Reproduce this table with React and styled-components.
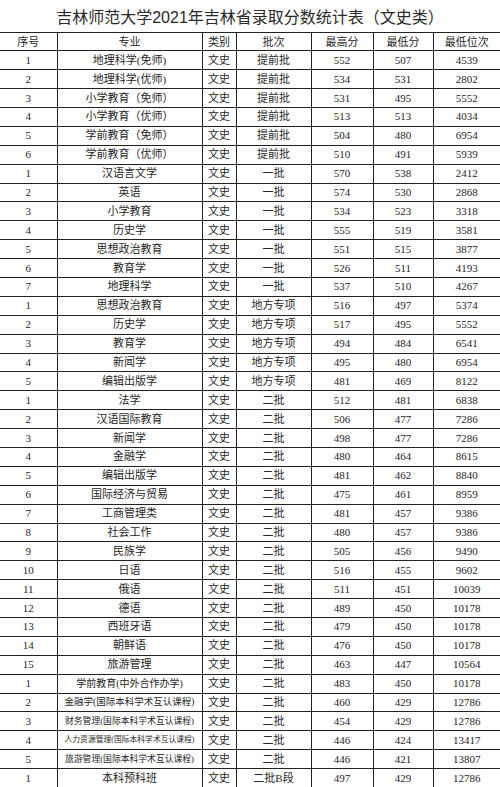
import React from "react";
import styled, { createGlobalStyle } from "styled-components";

const Global = createGlobalStyle`
  html, body { margin: 0; padding: 0; background: #fff; }
  body { width: 500px; overflow: hidden; }
`;

const Page = styled.div`
  width: 500px;
  background: #fff;
  color: #262626;
  font-family: "Liberation Serif", "Noto Sans CJK SC", serif;
`;

const Title = styled.h1`
  margin: 0;
  height: 32px;
  display: flex;
  align-items: center;
  justify-content: center;
  font-family: "Liberation Sans", "Noto Sans CJK SC", sans-serif;
  font-weight: 400;
  font-size: 16px;
  color: #2a2a2a;
`;

const Table = styled.table`
  width: 500px;
  border-collapse: collapse;
  table-layout: fixed;
`;

const HeadCell = styled.th`
  height: 17.3px;
  padding: 0;
  border: 1px solid #222;
  font-weight: 400;
  font-size: 11px;
  text-align: center;
  vertical-align: middle;
  line-height: 1;
  font-family: "Noto Sans CJK SC", sans-serif;
  &:first-child { border-left: none; }
  &:last-child { border-right: none; }
`;

const Cell = styled.td`
  height: 17.9px;
  padding: 0;
  border: 1px solid #222;
  font-size: ${(p) => p.$size || 11}px;
  text-align: center;
  vertical-align: middle;
  line-height: 1;
  white-space: nowrap;
  overflow: hidden;
  &:first-child { border-left: none; }
  &:last-child { border-right: none; }
`;

const cols = [57, 145, 34, 75, 62, 60, 67];
const heads = ["序号", "专业", "类别", "批次", "最高分", "最低分", "最低位次"];

const rows = [
  [1, "地理科学(免师)", "提前批", 552, 507, 4539],
  [2, "地理科学(优师)", "提前批", 534, 531, 2802],
  [3, "小学教育（免师）", "提前批", 531, 495, 5552],
  [4, "小学教育（优师）", "提前批", 513, 513, 4034],
  [5, "学前教育（免师）", "提前批", 504, 480, 6954],
  [6, "学前教育（优师）", "提前批", 510, 491, 5939],
  [1, "汉语言文学", "一批", 570, 538, 2412],
  [2, "英语", "一批", 574, 530, 2868],
  [3, "小学教育", "一批", 534, 523, 3318],
  [4, "历史学", "一批", 555, 519, 3581],
  [5, "思想政治教育", "一批", 551, 515, 3877],
  [6, "教育学", "一批", 526, 511, 4193],
  [7, "地理科学", "一批", 537, 510, 4267],
  [1, "思想政治教育", "地方专项", 516, 497, 5374],
  [2, "历史学", "地方专项", 517, 495, 5552],
  [3, "教育学", "地方专项", 494, 484, 6541],
  [4, "新闻学", "地方专项", 495, 480, 6954],
  [5, "编辑出版学", "地方专项", 481, 469, 8122],
  [1, "法学", "二批", 512, 481, 6838],
  [2, "汉语国际教育", "二批", 506, 477, 7286],
  [3, "新闻学", "二批", 498, 477, 7286],
  [4, "金融学", "二批", 480, 464, 8615],
  [5, "编辑出版学", "二批", 481, 462, 8840],
  [6, "国际经济与贸易", "二批", 475, 461, 8959],
  [7, "工商管理类", "二批", 481, 457, 9386],
  [8, "社会工作", "二批", 480, 457, 9386],
  [9, "民族学", "二批", 505, 456, 9490],
  [10, "日语", "二批", 516, 455, 9602],
  [11, "俄语", "二批", 511, 451, 10039],
  [12, "德语", "二批", 489, 450, 10178],
  [13, "西班牙语", "二批", 479, 450, 10178],
  [14, "朝鲜语", "二批", 476, 450, 10178],
  [15, "旅游管理", "二批", 463, 447, 10564],
  [1, "学前教育(中外合作办学)", "二批", 483, 450, 10178, 10],
  [2, "金融学(国际本科学术互认课程)", "二批", 460, 429, 12786, 9.5],
  [3, "财务管理(国际本科学术互认课程)", "二批", 454, 429, 12786, 8.8],
  [4, "人力资源管理(国际本科学术互认课程)", "二批", 446, 424, 13417, 7.8],
  [5, "旅游管理(国际本科学术互认课程)", "二批", 446, 421, 13807, 8.8],
  [1, "本科预科班", "二批B段", 497, 429, 12786],
];

export default function App() {
  return (
    <Page>
      <Global />
      <Title>吉林师范大学2021年吉林省录取分数统计表（文史类）</Title>
      <Table>
        <colgroup>
          {cols.map((w, i) => (
            <col key={i} style={{ width: w }} />
          ))}
        </colgroup>
        <thead>
          <tr>
            {heads.map((h) => (
              <HeadCell key={h}>{h}</HeadCell>
            ))}
          </tr>
        </thead>
        <tbody>
          {rows.map((r, i) => (
            <tr key={i}>
              <Cell>{r[0]}</Cell>
              <Cell $size={r[6]}>{r[1]}</Cell>
              <Cell>文史</Cell>
              <Cell>{r[2]}</Cell>
              <Cell>{r[3]}</Cell>
              <Cell>{r[4]}</Cell>
              <Cell>{r[5]}</Cell>
            </tr>
          ))}
        </tbody>
      </Table>
    </Page>
  );
}
